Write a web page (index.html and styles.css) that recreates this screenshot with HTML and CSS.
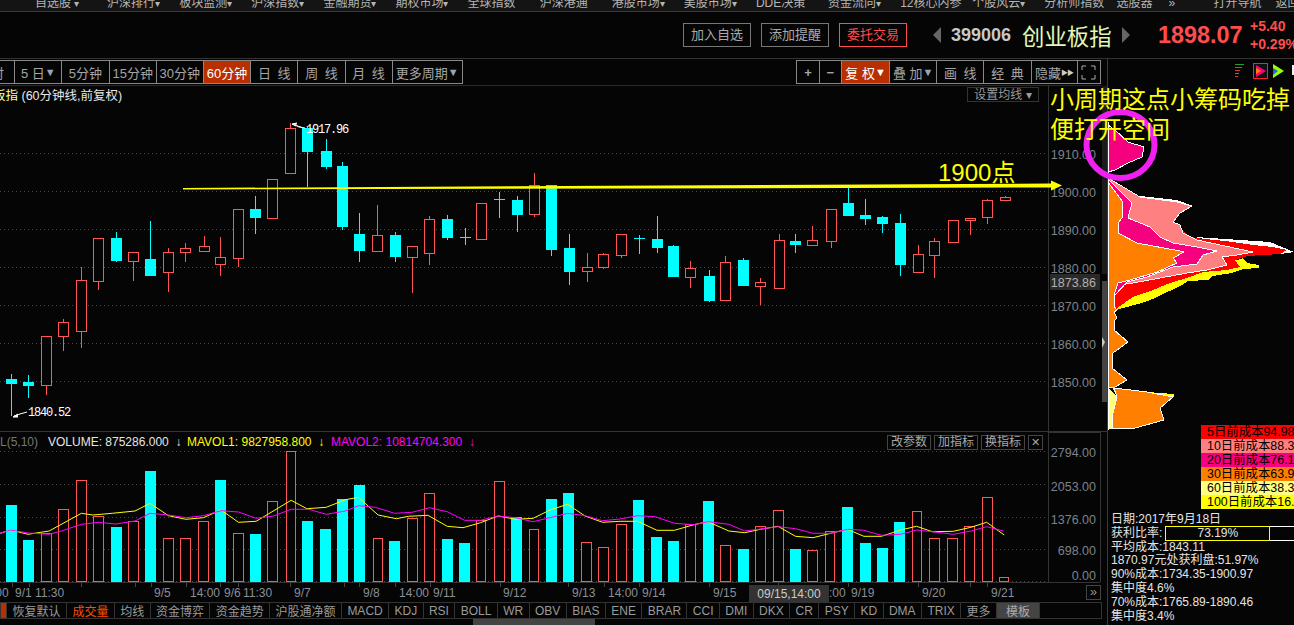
FILE: index.html
```html
<!DOCTYPE html>
<html lang="en">
<head>
  <meta charset="UTF-8">
  <meta name="viewport" content="width=device-width, initial-scale=1.0">
  <title>创业板指 60分钟</title>
  <link rel="stylesheet" href="styles.css">
</head>
<body>

  <div class="page">
    <nav class="menu">
      <span class="menu-item">自选股 <i>▾</i></span>
      <span class="menu-item">沪深排行<i>▾</i></span>
      <span class="menu-item">板块监测<i>▾</i></span>
      <span class="menu-item">沪深指数<i>▾</i></span>
      <span class="menu-item">金融期货<i>▾</i></span>
      <span class="menu-item">期权市场<i>▾</i></span>
      <span class="menu-item">全球指数</span>
      <span class="menu-item">沪深港通</span>
      <span class="menu-item">港股市场<i>▾</i></span>
      <span class="menu-item">美股市场<i>▾</i></span>
      <span class="menu-item">DDE决策</span>
      <span class="menu-item">资金流向<i>▾</i></span>
      <span class="menu-item">12核心内参</span>
      <span class="menu-item">个股风云<i>▾</i></span>
      <span class="menu-item">分析师指数</span>
      <span class="menu-item menu-short">选股器</span>
      <span class="menu-item menu-more">»</span>
      <span class="menu-item menu-nav">打开导航</span>
      <span class="menu-item">返回</span>
    </nav>

    <header class="quote">
      <button class="action">加入自选</button>
      <button class="action">添加提醒</button>
      <button class="action action-trade">委托交易</button>
      <span class="arrow arrow-left"></span>
      <span class="code">399006</span>
      <span class="name">创业板指</span>
      <span class="arrow arrow-right"></span>
      <span class="last">1898.07</span>
      <div class="change">
        <span>+5.40</span>
        <span>+0.29%</span>
      </div>
    </header>

    <div class="workspace">
      <section class="charts">
        <div class="tools">
          <div class="tabs tabs-period">
            <span class="tab">分时</span>
            <span class="tab">5&nbsp;日<i>▼</i></span>
            <span class="tab">5分钟</span>
            <span class="tab">15分钟</span>
            <span class="tab">30分钟</span>
            <span class="tab tab-on">60分钟</span>
            <span class="tab">日&ensp;线</span>
            <span class="tab">周&ensp;线</span>
            <span class="tab">月&ensp;线</span>
            <span class="tab tab-wide">更多周期<i>▼</i></span>
          </div>
          <div class="tabs">
            <span class="tab tab-small"><b>+</b></span>
            <span class="tab tab-small"><b>−</b></span>
            <span class="tab tab-on tab-fq">复&nbsp;权<i>▼</i></span>
            <span class="tab">叠&nbsp;加<i>▼</i></span>
            <span class="tab">画&ensp;线</span>
            <span class="tab">经&ensp;典</span>
            <span class="tab tab-hide">隐藏<i class="tiny">▶▶</i></span>
            <span class="tab tab-small">
              <svg width="15" height="15" viewBox="0 0 15 15" fill="none" stroke="#aaa">
                <path d="M1 5V1H5M10 1H14V5M14 10V14H10M5 14H1V10"/>
              </svg>
            </span>
          </div>
        </div>

        <div class="price-panel">
          <div class="title"><span class="title-name">板指</span> (60分钟线,前复权)</div>
          <button class="ma-set">设置均线 <i>▾</i></button>
        </div>

        <div class="vol-panel">
          <div class="vol-head">
            <span class="vol-name">L(5,10)</span>
            <span class="vol-item">VOLUME: 875286.000 &nbsp;↓</span>
            <span class="vol-item vol-m1">MAVOL1: 9827958.800 &nbsp;↓</span>
            <span class="vol-item vol-m2">MAVOL2: 10814704.300 &nbsp;↓</span>
            <div class="vol-btns">
              <span class="vol-btn">改参数</span>
              <span class="vol-btn">加指标</span>
              <span class="vol-btn">换指标</span>
              <span class="vol-btn vol-close">✕</span>
            </div>
          </div>
        </div>

        <div class="indicators">
          <span class="ind ind-flag"></span>
          <span class="ind ind-first">恢复默认</span>
          <span class="ind ind-on">成交量</span>
          <span class="ind">均线</span>
          <span class="ind">资金博弈</span>
          <span class="ind">资金趋势</span>
          <span class="ind">沪股通净额</span>
          <span class="ind">MACD</span>
          <span class="ind">KDJ</span>
          <span class="ind">RSI</span>
          <span class="ind">BOLL</span>
          <span class="ind">WR</span>
          <span class="ind">OBV</span>
          <span class="ind">BIAS</span>
          <span class="ind">ENE</span>
          <span class="ind">BRAR</span>
          <span class="ind">CCI</span>
          <span class="ind">DMI</span>
          <span class="ind">DKX</span>
          <span class="ind">CR</span>
          <span class="ind">PSY</span>
          <span class="ind">KD</span>
          <span class="ind">DMA</span>
          <span class="ind">TRIX</span>
          <span class="ind">更多</span>
          <span class="ind ind-tpl">模板</span>
        </div>
        <div class="slider"><span class="slider-thumb"></span></div>
      </section>

      <aside class="side">
        <div class="legend">
          <div class="legend-row c5">5日前成本94.98%</div>
          <div class="legend-row c10">10日前成本88.38%</div>
          <div class="legend-row c20">20日前成本76.15%</div>
          <div class="legend-row c30">30日前成本63.93%</div>
          <div class="legend-row c60">60日前成本38.31%</div>
          <div class="legend-row c100">100日前成本16.28%</div>
        </div>
        <div class="info">
          <div>日期:2017年9月18日</div>
          <div class="profit">获利比率:<span class="profit-bar"><span class="profit-fill">73.19%</span></span></div>
          <div>平均成本:1843.11</div>
          <div>1870.97元处获利盘:51.97%</div>
          <div>90%成本:1734.35-1900.97</div>
          <div>集中度4.6%</div>
          <div>70%成本:1765.89-1890.46</div>
          <div>集中度3.4%</div>
        </div>
      </aside>
    </div>

    <!-- candles, volume and chips are drawn into this one by chart.js -->
    <svg class="plot" id="plot" width="1294" height="625"></svg>

    <div class="note note-main">小周期这点小筹码吃掉<br>便打开空间</div>
    <div class="note note-1900">1900点</div>
  </div>

  <script src="chart.js"></script>
</body>
</html>
```

FILE: styles.css
```css
* {
  box-sizing: border-box;
}

body {
  margin: 0;
  background-color: #050505;
  font-family: "Liberation Sans", "Noto Sans CJK SC", sans-serif;
  color: #aaa;
}

i {
  font-style: normal;
}

button {
  font-family: inherit;
  background: none;
  padding: 0;
}

.page {
  position: relative;
  width: 1294px;
  height: 625px;
  overflow: hidden;
  display: flex;
  flex-direction: column;
}

/* top menu, cut by the window edge */
.menu {
  display: flex;
  flex: none;
  height: 12px;
  padding-left: 35px;
  background-color: #141414;
  border-bottom: 1px solid #3a3a3a;
  font-size: 12px;
  line-height: 6px;
  overflow: hidden;
  white-space: nowrap;
  color: #b5b5b5;
}

.menu-item {
  flex: none;
  width: 72.1px;
}

.menu-item i {
  font-size: 10px;
}

.menu-short {
  width: 52px;
}

.menu-more {
  width: 45px;
}

.menu-nav {
  width: 62px;
}

.quote {
  display: flex;
  flex: none;
  align-items: center;
  height: 47px;
  padding-left: 683px;
  border-bottom: 1px solid #333;
  white-space: nowrap;
}

.quote > * {
  flex: none;
}

.action {
  width: 68px;
  height: 24px;
  margin-right: 10px;
  border: 1px solid #777;
  color: #aaa;
  font-size: 13px;
  line-height: 20px;
}

.action-trade {
  margin-right: 26px;
  border-color: #ff4d4d;
  color: #ff4d4d;
}

.arrow {
  width: 0;
  height: 0;
  border-top: 8px solid transparent;
  border-bottom: 8px solid transparent;
}

.arrow-left {
  border-right: 8px solid #666;
  margin-right: 10px;
}

.arrow-right {
  border-left: 8px solid #666;
  margin: 0 28px 0 11px;
}

.code {
  width: 71px;
  font-size: 18px;
  font-weight: bold;
  color: #c8c8c8;
}

.name {
  width: 89px;
  font-size: 22.4px;
  color: #e2f7b5;
}

.last {
  width: 92px;
  font-size: 23.4px;
  font-weight: bold;
  color: #ff4d4d;
}

.change {
  display: flex;
  flex-direction: column;
  font-size: 14px;
  font-weight: bold;
  line-height: 18px;
  color: #ff4d4d;
}

.workspace {
  display: flex;
  flex: 1;
  min-height: 0;
}

.charts {
  display: flex;
  flex-direction: column;
  flex: none;
  width: 1108px;
  border-right: 1px solid #3a3a3a;
}

.tools {
  display: flex;
  flex: none;
  justify-content: space-between;
  width: 1101px;
  height: 27px;
  padding-top: 1px;
  border-bottom: 1px solid #2a2a2a;
}

.tabs {
  display: flex;
  height: 24px;
  border: 1px solid #888;
  border-left-width: 1px;
}

.tabs-period {
  margin-left: -33px;
}

.tab {
  display: flex;
  align-items: center;
  justify-content: center;
  width: 47.2px;
  border-right: 1px solid #888;
  font-size: 13px;
  white-space: nowrap;
  color: #a5a5a5;
}

.tab:last-child {
  border-right: none;
}

.tab i {
  font-size: 11px;
  color: #9aa4b5;
}

.tab .tiny {
  font-size: 7px;
  letter-spacing: -1px;
  color: #ccc;
}

.tab-wide {
  width: 69px;
}

.tab-small {
  width: 22.4px;
}

.tab-fq {
  width: 48px;
}

.tab-hide {
  width: 46px;
}

.tab-on {
  background-color: #b83000;
  color: #fff;
}

.tab-on i {
  color: #fff;
}

.price-panel {
  position: relative;
  flex: none;
  height: 346px;
  border-bottom: 1px solid #333;
}

.title {
  position: absolute;
  left: -7px;
  top: 2px;
  font-size: 12.5px;
  line-height: 17px;
  color: #e8e8e8;
  white-space: nowrap;
}

.title-name {
  color: #ffffa8;
}

.ma-set {
  position: absolute;
  left: 967px;
  top: 1px;
  width: 72px;
  height: 15px;
  border: 1px solid #333;
  color: #9a9a9a;
  font-size: 12px;
  line-height: 12px;
}

.vol-panel {
  flex: none;
  height: 170px;
}

.vol-head {
  display: flex;
  align-items: center;
  height: 20px;
  font-size: 12px;
  white-space: nowrap;
  color: #e6e6e6;
}

.vol-name {
  width: 48px;
  color: #777;
}

.vol-item {
  width: 139px;
}

.vol-m1 {
  width: 144px;
  color: #ffff00;
}

.vol-m2 {
  color: #ff00ff;
}

.vol-btns {
  display: flex;
  position: absolute;
  left: 887px;
  gap: 3px;
}

.vol-btn {
  width: 44px;
  height: 15px;
  border: 1px solid #444;
  color: #a8a8a8;
  text-align: center;
  line-height: 13px;
}

.vol-close {
  width: 15px;
  font-size: 11px;
}

.indicators {
  display: flex;
  flex: none;
  align-items: center;
  width: 1102px;
  height: 17px;
  border: 1px solid #333;
  font-size: 12px;
  color: #9a9a9a;
  white-space: nowrap;
}

.ind {
  display: flex;
  align-items: center;
  height: 100%;
  padding: 0 5.4px;
  border-right: 1px solid #333;
}

.ind-flag {
  width: 6px;
  padding: 0;
  background-color: #b83000;
}

.ind-first {
  width: 60px;
}

.ind-on {
  color: #ff4d00;
}

.ind-tpl {
  padding: 0 9px;
  background-color: #444;
  color: #aaa;
}

.slider {
  flex: none;
  height: 7px;
  padding-left: 473px;
}

.slider-thumb {
  display: block;
  width: 122px;
  height: 100%;
  background-color: #444;
}

.side {
  display: flex;
  flex-direction: column;
  justify-content: flex-end;
  flex: 1;
  min-width: 0;
  overflow: hidden;
}

.legend {
  margin-left: 93px;
  white-space: nowrap;
  font-size: 12.4px;
  color: #000;
}

.legend-row {
  height: 14px;
  line-height: 14px;
  padding-left: 6px;
}

.c5 { background-color: #ff0000; }
.c10 { background-color: #ff8080; }
.c20 { background-color: #f5007f; }
.c30 { background-color: #ff8000; }
.c60 { background-color: #ffff80; }
.c100 { background-color: #ffff00; }

.info {
  height: 116px;
  padding: 4px 0 0 3px;
  font-size: 12px;
  line-height: 13.8px;
  white-space: nowrap;
  color: #e4e4e4;
}

.profit {
  display: flex;
  align-items: center;
  height: 13.8px;
}

.profit-bar {
  display: block;
  flex: none;
  width: 130px;
  height: 15px;
  margin-left: 3px;
  border: 1px solid #fff;
  border-left: none;
}

.profit-fill {
  display: block;
  width: 105px;
  height: 15px;
  margin-top: -1px;
  border: 1px solid #ffff00;
  text-align: center;
  line-height: 13px;
}

/* drawing layer, sits over the panels */
.plot {
  position: absolute;
  left: 0;
  top: 0;
  pointer-events: none;
}

.plot text {
  font-family: "Liberation Sans", "Noto Sans CJK SC", sans-serif;
  font-size: 12.5px;
}

.plot .date {
  font-size: 12px;
}

.plot .mono {
  font-family: "Liberation Mono", monospace;
  font-size: 12px;
  letter-spacing: -1.2px;
}

.note {
  position: absolute;
  color: #ffff00;
  font-size: 24px;
  line-height: 30px;
  white-space: nowrap;
}

.note-main {
  left: 1050px;
  top: 85px;
}

.note-1900 {
  left: 938px;
  top: 158px;
}
```

FILE: chart.js
```js
// coordinates below were read off a 3x view of the chart, so they get scaled here
var KX = 2.958;
var VX = 2.851;
var UP = '#ff5555';
var DOWN = '#00ffff';
var svg = '';

function add(s) {
  svg += s;
}

function rect(x, y, w, h, fill, stroke) {
  add('<rect x="' + x + '" y="' + y + '" width="' + w + '" height="' + h + '" fill="' + fill + '"' +
    (stroke ? ' stroke="' + stroke + '"' : '') + ' shape-rendering="crispEdges"/>');
}

function line(x1, y1, x2, y2, color, dash) {
  add('<line x1="' + x1 + '" y1="' + y1 + '" x2="' + x2 + '" y2="' + y2 + '" stroke="' + color + '"' +
    (dash ? ' stroke-dasharray="' + dash + '"' : '') + ' shape-rendering="crispEdges"/>');
}

function label(x, y, text, color, anchor, cls) {
  add('<text x="' + x + '" y="' + y + '" fill="' + color + '" text-anchor="' + (anchor || 'start') + '"' +
    (cls ? ' class="' + cls + '"' : '') + '>' + text + '</text>');
}

// grid
var priceGrid = [153.5, 191.5, 229.5, 267.5, 305.5, 343.5, 381.5];
priceGrid.forEach(function(y) {
  line(0, y, 1052, y, '#4a4a4a', '1 3');
});
var volGrid = [451.5, 484.5, 517.5, 549.5, 581.5];
volGrid.forEach(function(y) {
  line(0, y, 1052, y, '#4a4a4a', '1 3');
});

// axes
line(1048.5, 85, 1048.5, 582, '#333');
line(1100.5, 432, 1100.5, 582, '#333');
line(1048.5, 432.5, 1100.5, 432.5, '#333');
line(0, 582.5, 1100, 582.5, '#333');
rect(1102, 86, 5, 188, '#1c1c1c');
rect(1102, 281, 5, 121, '#444');
add('<polygon points="1102,337 1105,342 1102,348" fill="#ccc"/>');

var priceLabels = [[159, '1910.00'], [197, '1900.00'], [235, '1890.00'], [273, '1880.00'], [311, '1870.00'], [349, '1860.00'], [387, '1850.00']];
priceLabels.forEach(function(p) {
  label(1096, p[0], p[1], '#7d828a', 'end');
});
rect(1050, 274, 50, 16, '#2a2a2a');
label(1096, 287, '1873.86', '#b0b0b0', 'end');

var volLabels = [[457, '2794.00'], [491, '2053.00'], [524, '1376.00'], [555, '698.00'], [580, '0.00']];
volLabels.forEach(function(p) {
  label(1096, p[0], p[1], '#7d828a', 'end');
});

// candles: [up?, x, wick top, body top, body bottom, wick bottom]
var candles = [
  [0, 34, 792, 807, 819, 918], [0, 84, 795, 815, 825, 864], [1, 137, 679, 679, 824, 855],
  [1, 187, 627, 637, 677, 723], [1, 241, 471, 511, 662, 714], [1, 291, 385, 385, 513, 540],
  [0, 344, 366, 384, 450, 456], [1, 394, 427, 427, 452, 513], [0, 445, 333, 447, 495, 495],
  [1, 498, 414, 427, 485, 546], [1, 548, 399, 415, 425, 456], [1, 602, 378, 409, 422, 422],
  [1, 652, 381, 442, 461, 498], [1, 705, 298, 298, 443, 471], [0, 755, 258, 297, 321, 372],
  [1, 806, 208, 208, 323, 327], [1, 859, 39, 55, 188, 188], [0, 909, 50, 53, 123, 232],
  [0, 963, 87, 123, 168, 177], [0, 1013, 156, 168, 348, 360], [0, 1063, 309, 372, 420, 456],
  [1, 1116, 285, 376, 422, 422], [0, 1167, 366, 375, 438, 456], [1, 1220, 409, 409, 440, 549],
  [1, 1270, 318, 328, 428, 465], [0, 1323, 315, 327, 381, 390], [0, 1374, 354, 382, 382, 405],
  [1, 1424, 280, 280, 386, 386], [0, 1477, 246, 268, 268, 324], [0, 1528, 258, 270, 312, 366],
  [1, 1581, 189, 226, 311, 321], [0, 1631, 225, 225, 417, 438], [0, 1682, 372, 414, 483, 525],
  [1, 1735, 429, 472, 482, 516], [1, 1785, 430, 433, 470, 477], [1, 1838, 373, 373, 434, 444],
  [0, 1889, 375, 385, 385, 432], [0, 1942, 318, 387, 411, 429], [0, 1992, 405, 408, 498, 498],
  [1, 2042, 453, 475, 500, 534], [0, 2096, 480, 498, 570, 576], [1, 2146, 438, 457, 569, 569],
  [0, 2199, 444, 450, 525, 528], [1, 2249, 504, 517, 527, 585], [1, 2303, 372, 391, 533, 537],
  [0, 2353, 372, 393, 402, 429], [1, 2403, 348, 391, 404, 404], [1, 2457, 298, 298, 392, 414],
  [0, 2507, 234, 279, 315, 318], [0, 2560, 267, 315, 324, 345], [0, 2610, 318, 321, 339, 369],
  [0, 2661, 312, 339, 462, 498], [1, 2714, 405, 433, 485, 485], [1, 2764, 384, 394, 434, 504],
  [1, 2818, 331, 331, 395, 399], [1, 2868, 324, 324, 329, 375], [1, 2921, 267, 271, 320, 342],
  [1, 2972, 258, 262, 269, 269]
];

function ky(v) {
  return Math.round(110 + v / 3);
}

candles.forEach(function(c) {
  var x = Math.round(c[1] / KX);
  var top = ky(c[3]);
  var bot = ky(c[4]);
  var color = c[0] ? UP : DOWN;
  line(x + 0.5, ky(c[2]), x + 0.5, top, color);
  line(x + 0.5, bot, x + 0.5, ky(c[5]), color);
  if (top === bot) {
    line(x - 5, top + 0.5, x + 6, top + 0.5, color);
  } else if (c[0]) {
    rect(x - 5 + 0.5, top + 0.5, 10, bot - top, '#050505', color);
  } else {
    rect(x - 5, top, 11, bot - top + 1, color);
  }
});

label(306, 133, '1917.96', '#fff', 'start', 'mono');
label(28, 416, '1840.52', '#fff', 'start', 'mono');
add('<path d="M305 128 L299 127 L293 124 M297 123 L292 124 L296 126" stroke="#fff" fill="#fff"/>');
add('<path d="M27 412 L20 414 L14 416 M18 414 L13 417 L18 417" stroke="#fff" fill="#fff"/>');

// volume: [up?, x left, x right, top]
var bars = [
  [0, 17, 48, 225], [0, 66, 97, 330], [1, 118, 147, 310], [1, 166, 196, 238], [1, 218, 247, 151],
  [1, 266, 296, 257], [0, 316, 348, 291], [1, 366, 395, 274], [0, 413, 445, 123], [1, 466, 495, 325],
  [1, 514, 544, 325], [1, 565, 595, 274], [0, 613, 644, 150], [1, 665, 695, 310], [0, 713, 744, 312],
  [1, 762, 792, 214], [1, 814, 843, 64], [0, 861, 892, 273], [0, 912, 944, 297], [0, 961, 992, 207],
  [0, 1009, 1041, 165], [1, 1062, 1091, 325], [0, 1109, 1140, 333], [1, 1161, 1191, 264], [1, 1210, 1239, 190],
  [0, 1260, 1291, 327], [0, 1309, 1340, 339], [1, 1358, 1387, 271], [1, 1409, 1439, 154], [0, 1457, 1488, 262],
  [1, 1509, 1538, 298], [0, 1557, 1588, 207], [0, 1605, 1636, 189], [1, 1657, 1687, 337], [1, 1705, 1735, 352],
  [1, 1757, 1787, 283], [0, 1805, 1836, 210], [0, 1856, 1887, 321], [0, 1904, 1936, 333], [1, 1954, 1983, 283],
  [0, 2004, 2036, 213], [1, 2054, 2083, 346], [0, 2103, 2135, 357], [1, 2153, 2183, 289], [1, 2205, 2234, 241],
  [0, 2252, 2284, 357], [1, 2302, 2331, 361], [1, 2353, 2382, 304], [0, 2400, 2432, 231], [0, 2452, 2483, 339],
  [0, 2500, 2532, 354], [0, 2549, 2580, 276], [1, 2601, 2630, 244], [1, 2649, 2679, 325], [1, 2701, 2730, 325],
  [1, 2749, 2779, 289], [1, 2801, 2830, 202], [1, 2849, 2878, 442]
];

function vy(v) {
  return Math.round(430 + v / 3);
}

bars.forEach(function(b) {
  var l = Math.round(b[1] / VX);
  var r = Math.round(b[2] / VX);
  var top = vy(b[3]);
  if (b[0]) {
    rect(l + 0.5, top + 0.5, r - l - 1, 582 - top - 1, '#050505', UP);
  } else {
    rect(l, top, r - l, 582 - top, DOWN);
  }
});

function maLine(points, color) {
  var p = points.map(function(d) {
    return (d[0] / VX).toFixed(1) + ',' + (430 + d[1] / 3).toFixed(1);
  }).join(' ');
  add('<polyline points="' + p + '" fill="none" stroke="' + color + '"/>');
}

maLine([[0, 310], [30, 300], [80, 313], [140, 303], [232, 250], [265, 255], [320, 250], [385, 243], [428, 220],
  [480, 257], [530, 268], [580, 263], [630, 240], [680, 277], [730, 274], [830, 211], [875, 236], [930, 232],
  [985, 209], [1022, 202], [1078, 255], [1130, 266], [1165, 259], [1220, 256], [1275, 289], [1320, 293],
  [1370, 278], [1420, 258], [1470, 268], [1520, 265], [1568, 240], [1618, 223], [1668, 258], [1718, 277],
  [1768, 274], [1818, 274], [1873, 301], [1923, 301], [1978, 284], [2018, 275], [2078, 303], [2123, 308],
  [2168, 298], [2218, 289], [2268, 319], [2318, 323], [2368, 310], [2416, 298], [2463, 319], [2513, 319],
  [2568, 300], [2613, 289], [2658, 305], [2718, 304], [2768, 292], [2813, 277], [2863, 315]], '#ffff00');

maLine([[0, 310], [30, 300], [80, 309], [140, 313], [175, 303], [232, 283], [280, 277], [330, 282], [385, 273],
  [428, 250], [480, 255], [530, 263], [580, 257], [630, 242], [680, 246], [730, 265], [780, 258], [830, 238],
  [880, 238], [930, 253], [985, 243], [1022, 227], [1070, 232], [1125, 250], [1175, 247], [1225, 233],
  [1275, 245], [1325, 271], [1370, 271], [1420, 258], [1470, 263], [1520, 275], [1568, 263], [1618, 250],
  [1668, 257], [1718, 272], [1768, 267], [1818, 257], [1868, 260], [1923, 280], [1978, 284], [2018, 275],
  [2078, 283], [2123, 303], [2168, 297], [2218, 290], [2268, 296], [2318, 310], [2368, 310], [2416, 298],
  [2463, 301], [2513, 316], [2568, 313], [2613, 300], [2658, 305], [2718, 313], [2768, 303], [2813, 290],
  [2861, 303]], '#ff00ff');

// date axis
var dates = [[-8, ':00'], [15, '9/1'], [35, '11:30'], [154, '9/5'], [190, '14:00'], [224, '9/6'], [243, '11:30'],
  [294, '9/7'], [363, '9/8'], [399, '14:00'], [433, '9/11'], [503, '9/12'], [572, '9/13'], [608, '14:00'],
  [642, '9/14'], [713, '9/15'], [829, ':00'], [851, '9/19'], [922, '9/20'], [991, '9/21']];
dates.forEach(function(d) {
  label(d[0], 597, d[1], '#8a8f98', 'start', 'date');
});
[12, 29, 81, 135, 151, 186, 220, 238, 290, 344, 359, 395, 430, 500, 568, 604, 639, 709, 778, 848, 918, 970, 987].forEach(function(x) {
  line(x + 0.5, 583, x + 0.5, 587, '#444');
});
rect(749, 585, 80, 17, '#333');
label(789, 598, '09/15,14:00', '#ccc', 'middle', 'date');

// » button at the end of the axis
rect(1086.5, 585.5, 14, 14, 'none', '#444');
label(1093.5, 596, '»', '#999', 'middle');

// chip distribution, points in the same 3x view: x = 1040 + v / 3, y = 110 + v / 3
function chip(points, fill, stroke) {
  var p = points.map(function(d) {
    return Math.round(1040 + d[0] / 3) + ',' + Math.round(110 + d[1] / 3);
  }).join(' ');
  add('<polygon points="' + p + '" fill="' + fill + '"' + (stroke ? ' stroke="' + stroke + '"' : '') + ' shape-rendering="crispEdges"/>');
}

var WHITE = '#ffffff';
chip([[205, 45], [225, 60], [265, 95], [312, 110], [305, 140], [265, 160], [225, 180], [205, 187]], '#f5007f', WHITE);
// white rims along the top of the shapes
chip([[300, 258], [412, 270], [458, 288], [300, 268]], WHITE);
chip([[465, 382], [690, 396], [762, 425], [720, 432], [640, 420]], WHITE);
chip([[400, 480], [590, 450], [610, 445], [620, 458], [657, 465], [657, 473], [610, 478], [575, 490], [520, 497],
  [505, 510], [445, 512], [425, 525], [395, 540], [375, 550], [350, 560], [325, 572], [295, 582], [262, 590],
  [228, 600], [222, 570]], '#ffff00');
chip([[400, 340], [415, 345], [440, 375], [465, 385], [555, 392], [640, 405], [700, 412], [740, 420], [720, 432],
  [620, 437], [585, 450], [600, 470], [560, 480], [490, 487], [440, 505], [390, 518], [340, 540], [280, 562],
  [240, 588], [228, 596], [222, 570], [222, 540], [300, 480]], '#ff0000');
chip([[205, 205], [240, 225], [300, 262], [410, 275], [455, 288], [420, 310], [400, 335], [420, 345], [430, 370],
  [470, 390], [640, 425], [590, 435], [545, 440], [560, 465], [500, 480], [440, 490], [360, 505], [280, 520],
  [240, 525], [225, 555], [205, 555]], '#ff8080', WHITE);
chip([[205, 208], [245, 250], [275, 280], [265, 325], [330, 350], [360, 380], [400, 400], [470, 410], [530, 422],
  [490, 435], [470, 462], [400, 470], [320, 500], [260, 515], [225, 555], [205, 555]], '#f5007f', WHITE);
chip([[205, 215], [250, 275], [245, 325], [235, 340], [235, 370], [290, 400], [420, 422], [432, 425], [400, 445],
  [410, 460], [350, 485], [270, 510], [235, 520], [222, 555], [222, 590], [230, 600], [222, 605], [232, 625],
  [225, 630], [222, 660], [265, 695], [220, 730], [215, 775], [260, 810], [225, 830], [205, 830]], '#ff8000', WHITE);
chip([[215, 830], [250, 838], [320, 845], [402, 852], [402, 862], [300, 860], [232, 860]], '#ffff00');
chip([[205, 832], [232, 862], [215, 920], [218, 958], [205, 958]], '#ffff80');
chip([[222, 835], [320, 847], [400, 862], [360, 895], [372, 930], [285, 955], [218, 958], [215, 920], [232, 862]], '#ff8000', WHITE);
line(1108.5, 122, 1108.5, 430, WHITE);

// little icons above the chips
[[1235, 64, 9, '#2a9d2a'], [1235, 67, 7, '#e23a2a'], [1235, 70, 5, '#e23a2a'], [1235, 73, 4, '#3a7ae2'], [1235, 76, 3, '#e23a2a']].forEach(function(b) {
  rect(b[0], b[1], b[2], 1, b[3]);
});
rect(1253.5, 63.5, 14, 15, '#111', '#ff2020');
add('<polygon points="1256,65 1266,71 1256,77" fill="#ff0080"/><polygon points="1256,68 1261,71 1256,74" fill="#ff8000"/>');
add('<polygon points="1273,64 1284,71 1273,78" fill="#9aff00"/><polygon points="1273,68 1278,71 1273,75" fill="#2060ff"/>');
rect(1292, 65, 2, 10, '#eee');

// hand drawn marks
add('<polygon points="183,188 1051,183.5 1051,180.5 1062,185.5 1051,190.5 1051,187.5 183,189.5" fill="#ffff00"/>');
add('<ellipse cx="1120.5" cy="145" rx="34" ry="33" fill="none" stroke="#f020f0" stroke-width="6"/>');

document.getElementById('plot').innerHTML = svg;
```
